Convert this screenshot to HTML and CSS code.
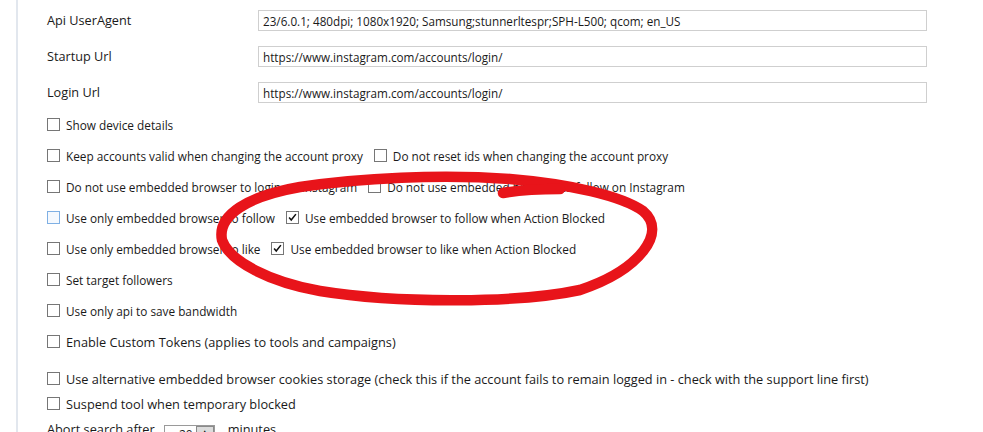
FILE: index.html
```html
<!DOCTYPE html>
<html lang="en">
<head>
  <meta charset="UTF-8">
  <title>Account Settings</title>
  <link rel="stylesheet" href="styles.css">
</head>
<body>
  <div class="panel">
    <div class="fields">
      <div class="field">
        <span class="name">Api UserAgent</span>
        <input class="text" type="text" value="23/6.0.1; 480dpi; 1080x1920; Samsung;stunnerltespr;SPH-L500; qcom; en_US">
      </div>
      <div class="field">
        <span class="name">Startup Url</span>
        <input class="text" type="text" value="https://www.instagram.com/accounts/login/">
      </div>
      <div class="field">
        <span class="name">Login Url</span>
        <input class="text" type="text" value="https://www.instagram.com/accounts/login/">
      </div>
    </div>

    <div class="options">
      <div class="row">
        <label class="check"><span class="box"></span>Show device details</label>
      </div>
      <div class="row">
        <label class="check"><span class="box"></span>Keep accounts valid when changing the account proxy</label>
        <label class="check"><span class="box"></span>Do not reset ids when changing the account proxy</label>
      </div>
      <div class="row">
        <label class="check"><span class="box"></span>Do not use embedded browser to login on Instagram</label>
        <label class="check"><span class="box"></span>Do not use embedded browser to follow on Instagram</label>
      </div>
      <div class="row">
        <label class="check"><span class="box hover"></span>Use only embedded browser to follow</label>
        <label class="check"><span class="box"><svg viewBox="0 0 13 13"><path d="M2.5 6.5 L5 9.5 L10.5 2.5" /></svg></span>Use embedded browser to follow when Action Blocked</label>
      </div>
      <div class="row">
        <label class="check"><span class="box"></span>Use only embedded browser to like</label>
        <label class="check"><span class="box"><svg viewBox="0 0 13 13"><path d="M2.5 6.5 L5 9.5 L10.5 2.5" /></svg></span>Use embedded browser to like when Action Blocked</label>
      </div>
      <div class="row">
        <label class="check"><span class="box"></span>Set target followers</label>
      </div>
      <div class="row">
        <label class="check"><span class="box"></span>Use only api to save bandwidth</label>
      </div>
      <div class="row big">
        <label class="check"><span class="box"></span>Enable Custom Tokens (applies to tools and campaigns)</label>
      </div>
      <div class="row big short first-short">
        <label class="check"><span class="box"></span>Use alternative embedded browser cookies storage (check this if the account fails to remain logged in - check with the support line first)</label>
      </div>
      <div class="row big short">
        <label class="check"><span class="box"></span>Suspend tool when temporary blocked</label>
      </div>
      <div class="row big short">
        <span class="plain">Abort search after</span>
        <span class="spin"><span class="value">20</span><span class="arrow">&#9650;</span></span>
        <span class="plain">minutes</span>
      </div>
    </div>
  </div>

  <!-- red marker circle drawn on top of the screenshot -->
  <svg class="marker" viewBox="0 0 983 432">
    <path d="M222 240 C 217 215, 248 196, 300 187 C 360 178, 440 174, 510 179 C 570 184, 622 196, 643 211 C 668 232, 640 270, 580 290 C 520 303, 400 304, 320 291 C 270 282, 230 262, 222 240" />
    <path d="M503 193 C 520 190, 540 189, 560 189" />
  </svg>
</body>
</html>
```

FILE: styles.css
```css
body {
  margin: 0;
  background: #fff;
  font-family: "Open Sans", "Noto Sans", sans-serif;
  font-size: 11.8px;
  color: #1a1a1a;
  overflow: hidden;
}
.panel {
  margin-left: 16px;
  border-left: 2px solid #e2e7ee;
  height: 432px;
  padding-left: 29px;
  padding-top: 10px;
  box-sizing: border-box;
}
.fields {
  display: flex;
  flex-direction: column;
  gap: 15px;
}
.field {
  display: flex;
  align-items: center;
  height: 21px;
}
.name {
  width: 211px;
  font-size: 12.7px;
  margin-top: -1px;
}
.text {
  width: 669px;
  height: 21px;
  box-sizing: border-box;
  border: 1px solid #cfcfcf;
  padding: 0 4px;
  font-family: inherit;
  font-size: 11.7px;
  color: #1a1a1a;
  outline: none;
}
.options {
  margin-top: 6px;
}
.row {
  display: flex;
  align-items: center;
  height: 31px;
}
.row.big {
  font-size: 12.75px;
}
.row.short {
  height: 25px;
}
.row.first-short {
  margin-top: 9px;
}
.check {
  display: flex;
  align-items: center;
  margin-right: 11px;
  white-space: nowrap;
}
.box {
  width: 13px;
  height: 13px;
  box-sizing: border-box;
  border: 1px solid #767676;
  background: #fff;
  margin-right: 6px;
  display: inline-flex;
}
.box.hover {
  border-color: #7fb0e4;
  background: #f5f9fe;
}
.box svg {
  width: 11px;
  height: 11px;
  fill: none;
  stroke: #111;
  stroke-width: 1.8;
}
.plain {
  white-space: nowrap;
}
.spin {
  display: flex;
  align-items: flex-start;
  width: 51px;
  height: 20px;
  box-sizing: border-box;
  border: 1px solid #9a9a9a;
  margin: 0 13px 0 9px;
  position: relative;
  top: 6px;
  font-size: 12px;
}
.spin .value {
  flex: 1;
  text-align: right;
  padding-right: 3px;
  line-height: 18px;
}
.spin .arrow {
  width: 16px;
  height: 10px;
  background: #dcdcdc;
  border: 1px solid #8a8a8a;
  font-size: 8px;
  line-height: 10px;
  text-align: center;
  color: #000;
}
.marker {
  position: absolute;
  left: 0;
  top: 0;
  width: 983px;
  height: 432px;
  pointer-events: none;
}
.marker path {
  fill: none;
  stroke: #e8141a;
  stroke-width: 10.5;
  stroke-linecap: round;
}
```
